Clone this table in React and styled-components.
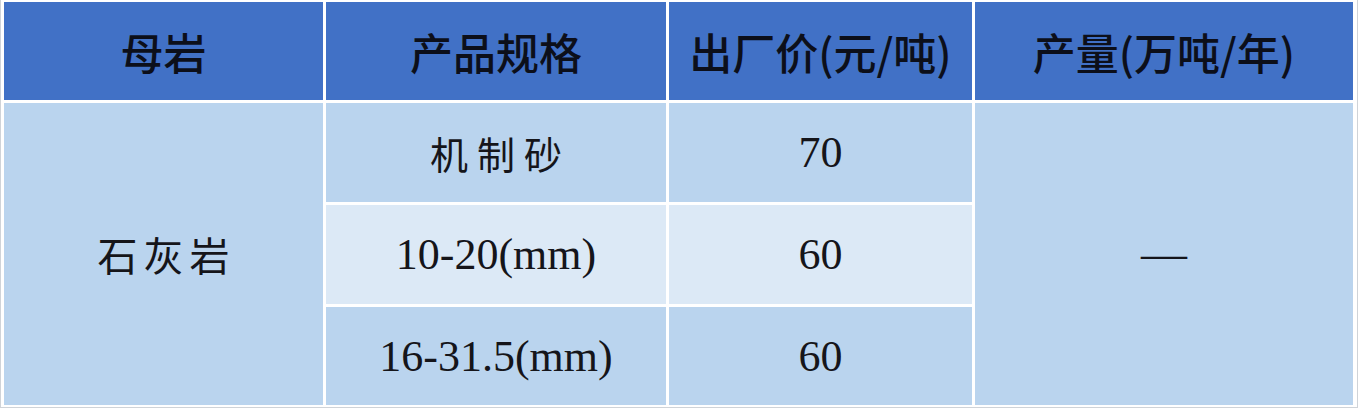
import React from 'react'
import styled, { createGlobalStyle } from 'styled-components'

const GlobalStyle = createGlobalStyle`
  html, body {
    margin: 0;
    padding: 0;
    background: #ffffff;
  }
`

const Frame = styled.div`
  width: 1358px;
  height: 408px;
  box-sizing: border-box;
  padding: 2px 3px 0 3px;
  border-left: 1px solid #cfd3d8;
  border-right: 1px solid #cfd3d8;
  border-bottom: 1px solid #cfd3d8;
  background: #ffffff;
`

const Table = styled.div`
  display: grid;
  grid-template-columns: 319px 340px 303px 378px;
  grid-template-rows: 98px 99px 99px 98px;
  gap: 3px;
`

const HeadCell = styled.div`
  background: #4171c6;
  display: flex;
  align-items: center;
  justify-content: center;
  font-family: "Noto Sans CJK SC", "Noto Sans", sans-serif;
  font-weight: 500;
  font-size: 43px;
  color: #0c0f1a;
`

const Cell = styled.div`
  background: ${p => (p.$light ? '#dce9f6' : '#bad4ee')};
  display: flex;
  align-items: center;
  justify-content: center;
  grid-column: ${p => p.$col || 'auto'};
  grid-row: ${p => p.$row || 'auto'};
  color: #15151a;
`

const CjkText = styled.span`
  font-family: "Noto Sans CJK SC", "Noto Sans", sans-serif;
  font-weight: 400;
  font-size: ${p => p.$size || 38}px;
  letter-spacing: ${p => p.$spacing || 0}px;
  margin-right: -${p => p.$spacing || 0}px;
`

const NumText = styled.span`
  font-family: "Liberation Serif", "Times New Roman", serif;
  font-size: 44px;
`

const Dash = styled.span`
  font-family: "Liberation Serif", "Times New Roman", serif;
  font-size: 46px;
  line-height: 1;
`

const rows = [
  { spec: '机制砂', cjk: true, price: '70' },
  { spec: '10-20(mm)', price: '60', light: true },
  { spec: '16-31.5(mm)', price: '60' },
]

export default function App() {
  return (
    <>
      <GlobalStyle />
      <Frame>
        <Table>
          <HeadCell>母岩</HeadCell>
          <HeadCell>产品规格</HeadCell>
          <HeadCell>出厂价(元/吨)</HeadCell>
          <HeadCell>产量(万吨/年)</HeadCell>

          <Cell $col="1" $row="2 / span 3">
            <CjkText $size={40} $spacing={6}>石灰岩</CjkText>
          </Cell>
          {rows.map((r, i) => (
            <React.Fragment key={i}>
              <Cell $col="2" $row={i + 2} $light={r.light}>
                {r.cjk ? (
                  <CjkText $size={38} $spacing={9}>{r.spec}</CjkText>
                ) : (
                  <NumText>{r.spec}</NumText>
                )}
              </Cell>
              <Cell $col="3" $row={i + 2} $light={r.light}>
                <NumText>{r.price}</NumText>
              </Cell>
            </React.Fragment>
          ))}
          <Cell $col="4" $row="2 / span 3">
            <Dash>—</Dash>
          </Cell>
        </Table>
      </Frame>
    </>
  )
}
